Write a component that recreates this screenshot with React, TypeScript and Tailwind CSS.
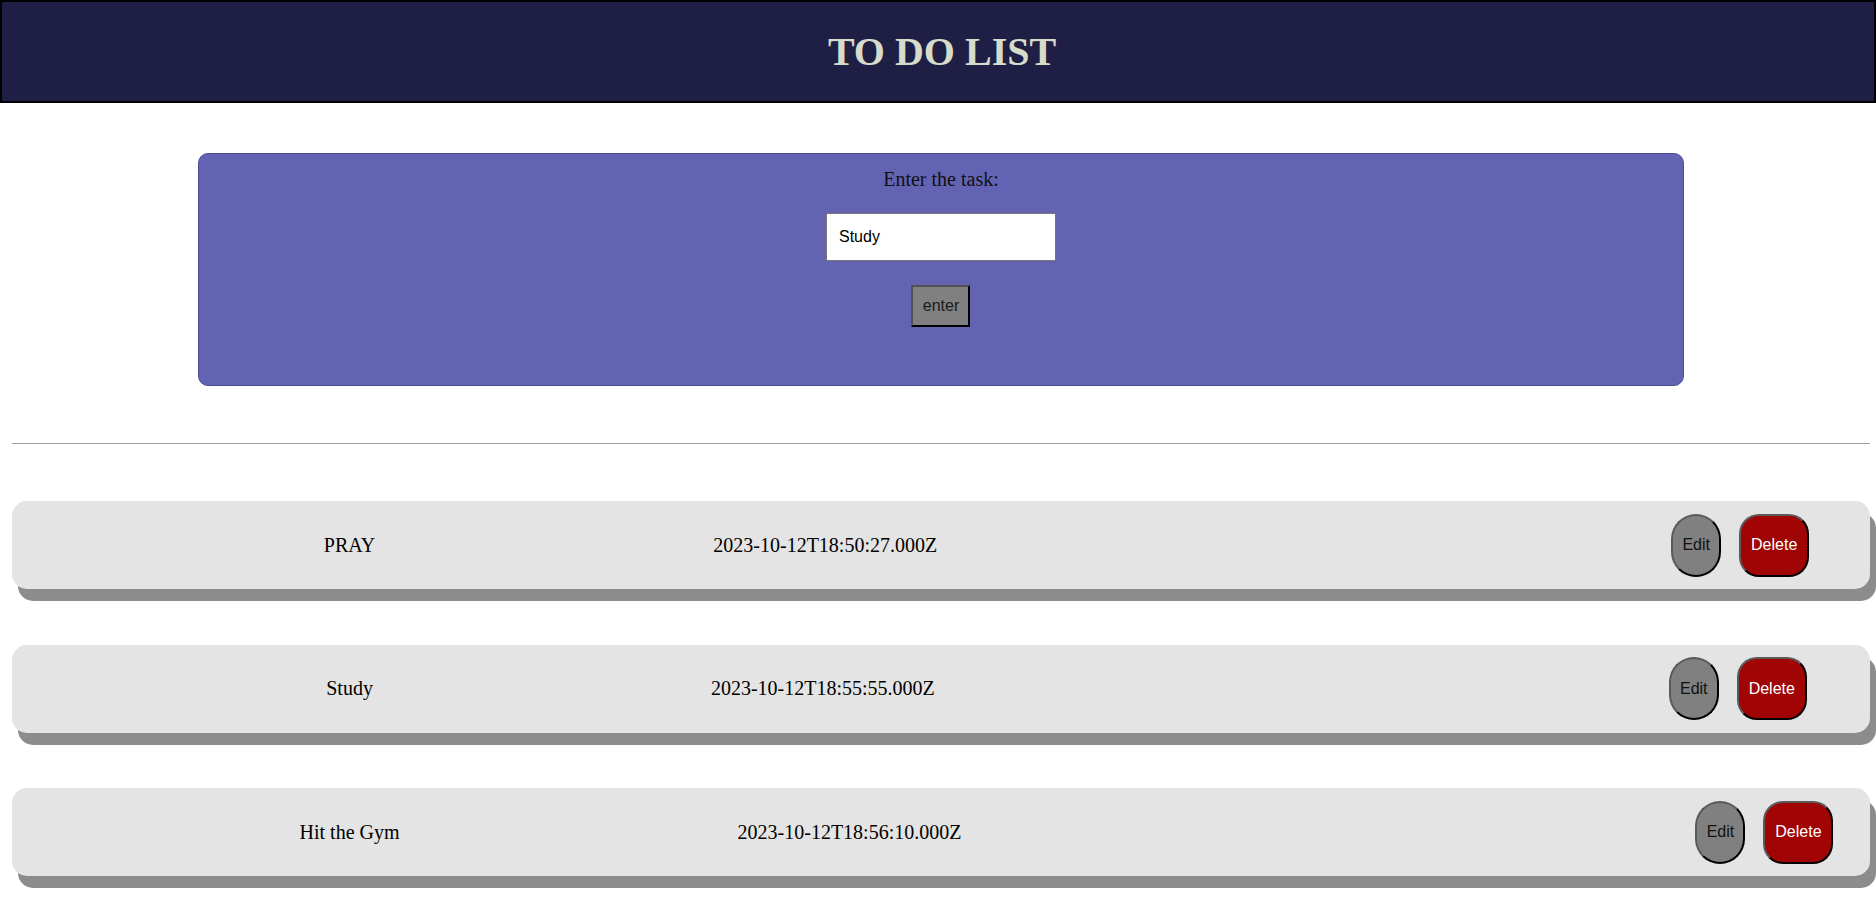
import React from 'react';

const tasks = [
  { id: 1, name: 'PRAY', date: '2023-10-12T18:50:27.000Z' },
  { id: 2, name: 'Study', date: '2023-10-12T18:55:55.000Z' },
  { id: 3, name: 'Hit the Gym', date: '2023-10-12T18:56:10.000Z' },
];

const serif = "font-['Liberation_Serif','Times_New_Roman',serif]";
const sans = "font-['Liberation_Sans',Arial,sans-serif]";

function TaskRow({ name, date }: { name: string; date: string }) {
  return (
    <div className="flex h-[88px] items-center justify-center rounded-[15px] bg-[#e4e4e4] shadow-[6px_12px_0_#8c8c8c]">
      <span className={`${serif} px-[251px] text-[20px] leading-[23px] text-black`}>{name}</span>
      <span className={`${serif} ml-[87px] text-[20px] leading-[23px] text-black`}>{date}</span>
      <div className="ml-[734px] flex items-center gap-[18px]">
        <button
          className={`${sans} h-[63px] w-[50px] rounded-[25px] border-2 border-t-[#5a5a5a] border-l-[#5a5a5a] border-r-black border-b-black bg-[#808080] text-[16px] leading-[18px] text-[#111]`}
        >
          Edit
        </button>
        <button
          className={`${sans} h-[63px] w-[70px] rounded-[20px] border-2 border-t-[#5a5a5a] border-l-[#5a5a5a] border-r-black border-b-black bg-[#a00404] text-[16px] leading-[18px] text-white`}
        >
          Delete
        </button>
      </div>
    </div>
  );
}

export default function App() {
  return (
    <div className="min-h-[912px] bg-white">
      <header className="flex h-[103px] items-center justify-center border-2 border-black bg-[#1f1f46] pl-[8px]">
        <h1 className={`${serif} text-[40px] font-bold leading-[46px] text-[#d7dbca]`}>TO DO LIST</h1>
      </header>

      <div className="ml-[12px] mr-[6px]">
        <div className="mx-auto mt-[50px] flex h-[233px] w-4/5 flex-col items-center rounded-[10px] border border-[#4b4c92] bg-[#6264b3] pt-[14px]">
          <label className={`${serif} text-[20px] leading-[23px] text-[#111]`}>Enter the task:</label>
          <input
            defaultValue="Study"
            className={`${sans} mt-[22px] h-[48px] w-[230px] border border-[#767676] bg-white pl-[12px] text-[16px] text-black outline-none`}
          />
          <button
            className={`${sans} mt-[24px] h-[42px] w-[59px] border-2 border-t-[#505050] border-l-[#505050] border-r-black border-b-black bg-[#808080] text-[16px] leading-[18px] text-[#1a1a1a]`}
          >
            enter
          </button>
        </div>

        <hr className="mt-[57px] border-t border-[#a0a0a0]" />

        <div className="mt-[57px] flex flex-col gap-[55.5px]">
          {tasks.map((t) => (
            <TaskRow key={t.id} name={t.name} date={t.date} />
          ))}
        </div>
      </div>
    </div>
  );
}
